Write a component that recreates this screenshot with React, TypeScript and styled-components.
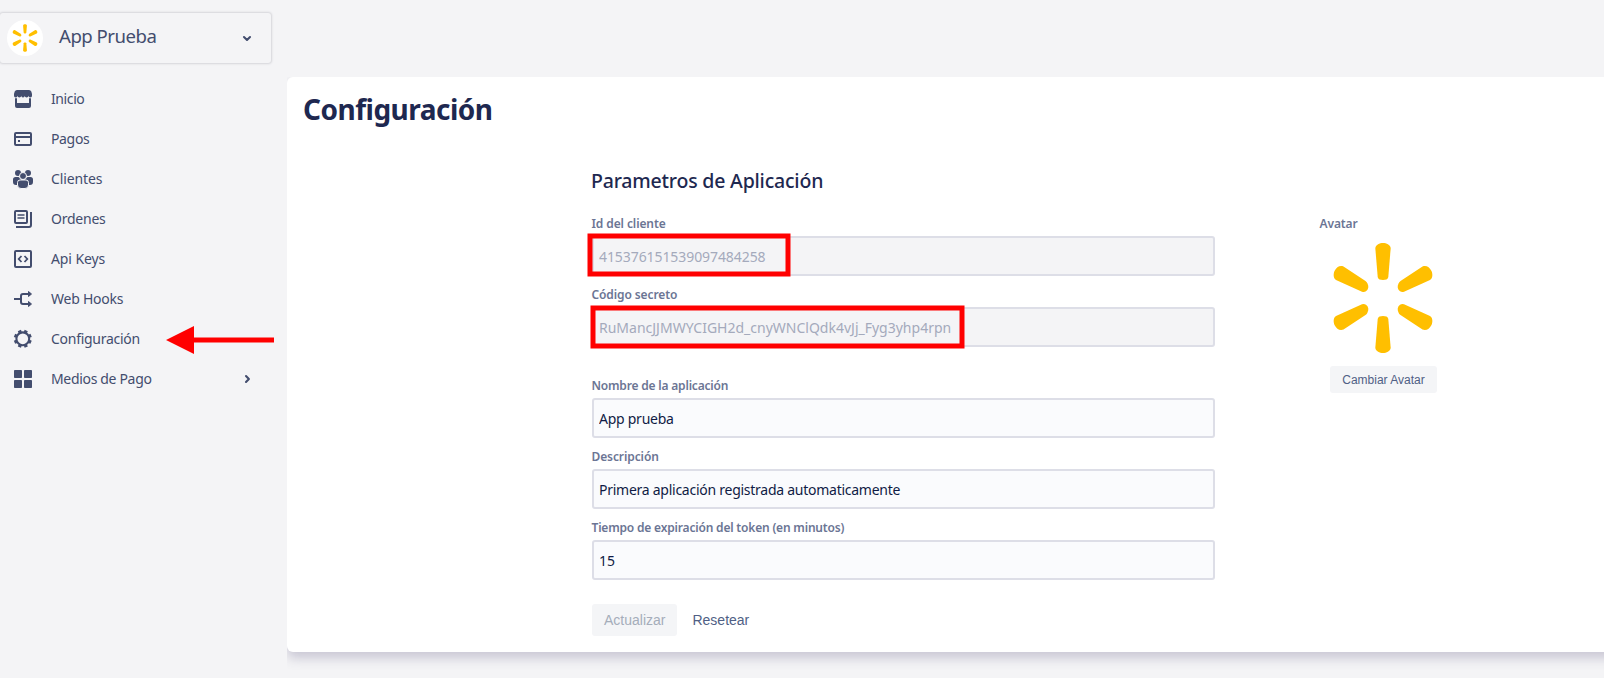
import React from "react";
import styled, { createGlobalStyle } from "styled-components";

const GlobalStyle = createGlobalStyle`
  *, *::before, *::after { box-sizing: border-box; }
  body {
    margin: 0;
    background: #f4f4f6;
    font-family: "Noto Sans", "Open Sans", sans-serif;
    font-size: 14px;
    overflow: hidden;
  }
`;

const Page = styled.div`
  display: flex;
  width: 100%;
  height: 678px;
  overflow: hidden;
`;

const Sidebar = styled.aside`
  flex: 0 0 287px;
  padding-top: 13px;
  color: #434d6e;
`;

const AppSwitcher = styled.button`
  display: flex;
  align-items: center;
  width: 271px;
  height: 50px;
  margin: 0;
  padding: 0 12px 0 7px;
  border: 0;
  border-radius: 3px;
  background: #f4f4f6;
  box-shadow: 0 0 2px 1px #d5d5da;
  color: inherit;
  font-family: inherit;
  text-align: left;
`;

const AppAvatar = styled.span`
  display: flex;
  align-items: center;
  justify-content: center;
  width: 36px;
  height: 36px;
  border-radius: 50%;
  background: #fff;
`;

const AppName = styled.span`
  flex: 1;
  padding: 0 0 6px 16px;
  font-size: 18.6px;
  line-height: 25px;
  letter-spacing: -0.5px;
`;

const Nav = styled.nav`
  display: flex;
  flex-direction: column;
  padding-top: 16px;
`;

const NavItem = styled.a`
  position: relative;
  display: flex;
  align-items: center;
  width: 271px;
  height: 40px;
  padding: 0 12px 0 11px;
`;

const NavText = styled.span<{ $track: number }>`
  flex: 1;
  margin-left: 16px;
  line-height: 20px;
  letter-spacing: ${(p) => p.$track}px;
`;

const Icon = styled.svg`
  flex: none;
  display: block;
  width: 24px;
  height: 24px;
`;

const Pointer = styled.svg`
  position: absolute;
  left: 166px;
  top: 6px;
  width: 109px;
  height: 30px;
`;

const Main = styled.main`
  flex: 1;
  min-width: 0;
  padding-top: 77px;
`;

const Card = styled.section`
  height: 575px;
  margin-right: -30px;
  padding: 15px 0 0 16px;
  border-radius: 6px 0 0 6px;
  background: #fff;
  box-shadow: 0 6px 12px 0 rgba(70, 64, 110, 0.25);
  clip-path: inset(0 0 -30px 0);
`;

const Title = styled.h1`
  margin: 0;
  color: #1e2850;
  font-size: 28px;
  font-weight: 700;
  line-height: 34px;
  letter-spacing: -0.5px;
`;

const Columns = styled.div`
  display: flex;
  gap: 105px;
  margin: 41px 0 0 289px;
`;

const Form = styled.form`
  display: flex;
  flex-direction: column;
  width: 623px;
`;

const Subtitle = styled.h2`
  margin: 0 0 21px -1px;
  color: #1e2850;
  font-size: 19.5px;
  font-weight: 550;
  line-height: 28px;
  letter-spacing: -0.2px;
`;

const Group = styled.div`
  display: flex;
  flex-direction: column;
  gap: 11px;
  margin-bottom: 31px;

  & + & { margin-bottom: 24px; }
`;

const Field = styled.div`
  position: relative;
  height: 60px;
`;

const Label = styled.label<{ $track: number }>`
  display: block;
  height: 20px;
  margin-left: -0.5px;
  color: #6b7594;
  font-size: 12px;
  font-weight: 650;
  line-height: 16px;
  letter-spacing: ${(p) => p.$track}px;
`;

const Input = styled.input<{ $track: number }>`
  display: block;
  width: 100%;
  height: 40px;
  padding: 0 6px 0 5px;
  border: 2px solid #dddee7;
  border-radius: 3px;
  background: #fafbfd;
  color: #101b45;
  font-family: inherit;
  font-size: 14px;
  line-height: 20px;
  letter-spacing: ${(p) => p.$track}px;

  &:disabled {
    background: #f4f4f6;
    color: #a4aabc;
  }
`;

const Highlight = styled.svg`
  position: absolute;
  left: -6px;
  top: 16px;
  width: 390px;
  height: 50px;
`;

const Actions = styled.div`
  display: flex;
  gap: 3px;
`;

const Button = styled.button<{ $plain?: boolean; $small?: boolean }>`
  height: ${(p) => (p.$small ? 27 : 32)}px;
  padding: 0 12px;
  border: 0;
  border-radius: 3px;
  background: ${(p) => (p.$plain ? "transparent" : "#f4f5f7")};
  color: #505f85;
  font-family: "Liberation Sans", Arial, sans-serif;
  font-size: ${(p) => (p.$small ? 12 : 14)}px;
  line-height: ${(p) => (p.$small ? 14 : 20)}px;
  white-space: nowrap;

  &:disabled { color: #a5adba; }
`;

const AvatarPanel = styled.div`
  display: flex;
  flex-direction: column;
  width: 127px;
  padding-top: 49px;
`;

const AvatarImage = styled.div`
  display: flex;
  justify-content: center;
  height: 124px;
  padding: 6px 1px 0 0;
  margin-bottom: 6px;
`;

const Centered = styled.div`
  display: flex;
  justify-content: center;
`;

const Spark = ({ size }: { size: number }) => (
  <svg width={size} height={size} viewBox="-56 -56 112 112" fill="#ffbf00">
    {[0, 180].map((a) => (
      <path
        key={a}
        transform={`rotate(${a})`}
        d="M-7.7-50C-7-53.5-3.5-55 0-55S7-53.5 7.7-50L5.3-21C5-18.6 2.5-18 0-18S-5-18.6-5.3-21Z"
      />
    ))}
    {[
      [1, 1],
      [-1, 1],
      [1, -1],
      [-1, -1],
    ].map(([x, y]) => (
      <path
        key={`${x}${y}`}
        transform={`scale(${x} ${-y})`}
        d="M15.5-14.5C14-11.5 14.5-8.5 17-6.7Q19-5.5 21-6.3L47-18C49.5-19.5 50-23.5 48.5-27C46.5-31 43-33 39.5-31.5L17.5-17Q16-16 15.5-14.5Z"
      />
    ))}
  </svg>
);

const Chevron = ({ right }: { right?: boolean }) => (
  <Icon viewBox="0 0 24 24" fill="none" stroke="currentColor" strokeWidth="2.1" strokeLinecap="round" strokeLinejoin="round">
    <path d={right ? "M11 9l2.9 3-2.9 3" : "M9 11l3 2.9 3-2.9"} />
  </Icon>
);

const icons = {
  shop: (
    <g fill="currentColor">
      <path d="M6 3h12a2.5 2.5 0 0 1 2.3 1.5L21 7v1.500a1.800 1.800 0 0 1-3.600 0.300 1.800 1.800 0 0 1-3.600 0 1.800 1.800 0 0 1-3.600 0 1.800 1.800 0 0 1-3.600 0A1.800 1.800 0 0 1 3 8.500V7l.7-2.500A2.500 2.500 0 0 1 6 3z" />
      <path d="M4 11.300h2V16h12v-4.700h2V19a2 2 0 0 1-2 2H6a2 2 0 0 1-2-2z" />
    </g>
  ),
  card: (
    <g fill="none" stroke="currentColor" strokeWidth="2">
      <rect x="4" y="6" width="16" height="12" rx="1" />
      <path d="M4 10h16" />
      <path d="M7 14h2" />
    </g>
  ),
  people: (
    <g fill="currentColor">
      <circle cx="7" cy="6" r="3" />
      <circle cx="17" cy="6" r="3" />
      <path d="M2 12.5A2.5 2.5 0 0 1 4.5 10H7.5L10 12.5V18H5a3 3 0 0 1-3-3zM22 12.5A2.5 2.5 0 0 0 19.5 10h-3L14 12.5V18h5a3 3 0 0 0 3-3z" />
      <g stroke="#f4f4f6">
        <circle cx="12" cy="9" r="3.5" />
        <path d="M6.5 15.5A2.5 2.5 0 0 1 9 13h6a2.5 2.5 0 0 1 2.5 2.5v2.5a3.5 3.5 0 0 1-3.5 3.5h-4a3.5 3.5 0 0 1-3.5-3.5z" />
      </g>
    </g>
  ),
  orders: (
    <g fill="none" stroke="currentColor" strokeWidth="2">
      <rect x="4" y="4" width="12" height="12" rx="1" />
      <path d="M6.5 8h7M6.5 11h7" strokeWidth="1.6" />
      <path d="M20 5v13a2 2 0 0 1-2 2H5" />
    </g>
  ),
  code: (
    <g fill="none" stroke="currentColor" strokeWidth="2">
      <rect x="4" y="4" width="16" height="16" rx="1" />
      <path d="M10.5 9L7.7 12l2.8 3M13.5 9l2.8 3-2.8 3" strokeWidth="1.8" />
    </g>
  ),
  hooks: (
    <g fill="none" stroke="currentColor" strokeWidth="2">
      <path d="M3 12h7M19 7h-7a2 2 0 0 0-2 2v6a2 2 0 0 0 2 2h7" />
      <path d="M17.5 4.5L20.5 7l-3 2.5zM17.5 14.5l3 2.5-3 2.5z" fill="currentColor" strokeWidth="1" strokeLinejoin="round" />
    </g>
  ),
  gear: (
    <g fill="none" stroke="currentColor">
      <circle cx="11.8" cy="11.8" r="6.4" strokeWidth="2.1" />
      {[22.5, 67.5, 112.5, 157.5, 202.5, 247.5, 292.5, 337.5].map((a) => (
        <path key={a} d="M10.1 4h3.4" strokeWidth="2.4" transform={`rotate(${a} 11.8 11.8)`} />
      ))}
    </g>
  ),
  grid: (
    <g fill="currentColor">
      <rect x="3" y="3" width="8" height="8" rx="0.8" />
      <rect x="13" y="3" width="8" height="8" rx="0.8" />
      <rect x="3" y="13" width="8" height="8" rx="0.8" />
      <rect x="13" y="13" width="8" height="8" rx="0.8" />
    </g>
  ),
};

const navItems: { icon: keyof typeof icons; text: string; track: number; marked?: boolean; expandable?: boolean }[] = [
  { icon: "shop", text: "Inicio", track: -0.4 },
  { icon: "card", text: "Pagos", track: -0.35 },
  { icon: "people", text: "Clientes", track: -0.1 },
  { icon: "orders", text: "Ordenes", track: -0.23 },
  { icon: "code", text: "Api Keys", track: -0.1 },
  { icon: "hooks", text: "Web Hooks", track: -0.25 },
  { icon: "gear", text: "Configuración", track: -0.28, marked: true },
  { icon: "grid", text: "Medios de Pago", track: -0.33, expandable: true },
];

interface FieldProps {
  id: string;
  label: string;
  value: string;
  labelTrack: number;
  track: number;
  disabled?: boolean;
  children?: React.ReactNode;
}

const TextField = ({ id, label, value, labelTrack, track, disabled, children }: FieldProps) => (
  <Field>
    <Label htmlFor={id} $track={labelTrack}>{label}</Label>
    <Input id={id} defaultValue={value} disabled={disabled} $track={track} />
    {children}
  </Field>
);

export default function App() {
  return (
    <>
      <GlobalStyle />
      <Page>
        <Sidebar>
          <AppSwitcher type="button">
            <AppAvatar>
              <Spark size={28} />
            </AppAvatar>
            <AppName>App Prueba</AppName>
            <Chevron />
          </AppSwitcher>
          <Nav>
            {navItems.map((item) => (
              <NavItem key={item.text}>
                <Icon viewBox="0 0 24 24">{icons[item.icon]}</Icon>
                <NavText $track={item.track}>{item.text}</NavText>
                {item.expandable && <Chevron right />}
                {item.marked && (
                  <Pointer viewBox="0 0 109 30" fill="#f00">
                    <path d="M0 15L28 1V12.5H108V17.5H28V29Z" />
                  </Pointer>
                )}
              </NavItem>
            ))}
          </Nav>
        </Sidebar>
        <Main>
          <Card>
            <Title>Configuración</Title>
            <Columns>
              <Form>
                <Subtitle>Parametros de Aplicación</Subtitle>
                <Group>
                  <TextField id="client" label="Id del cliente" value="415376151539097484258" labelTrack={-0.1} track={-0.08} disabled>
                    <Highlight viewBox="0 0 390 50" fill="none" stroke="#f00" strokeWidth="5">
                      <rect x="4" y="4" width="198" height="38" />
                    </Highlight>
                  </TextField>
                  <TextField id="secret" label="Código secreto" value="RuMancJJMWYCIGH2d_cnyWNClQdk4vJj_Fyg3yhp4rpn" labelTrack={-0.1} track={0} disabled>
                    <Highlight viewBox="0 0 390 50" fill="none" stroke="#f00" strokeWidth="5">
                      <rect x="7" y="5" width="369" height="38" />
                    </Highlight>
                  </TextField>
                </Group>
                <Group>
                  <TextField id="name" label="Nombre de la aplicación" value="App prueba" labelTrack={-0.19} track={-0.26} />
                  <TextField id="description" label="Descripción" value="Primera aplicación registrada automaticamente" labelTrack={-0.1} track={-0.26} />
                  <TextField id="expiration" label="Tiempo de expiración del token (en minutos)" value="15" labelTrack={-0.185} track={0} />
                </Group>
                <Actions>
                  <Button type="button" disabled>Actualizar</Button>
                  <Button type="button" $plain>Resetear</Button>
                </Actions>
              </Form>
              <AvatarPanel>
                <Label as="span" $track={-0.1}>Avatar</Label>
                <AvatarImage>
                  <Spark size={112} />
                </AvatarImage>
                <Centered>
                  <Button type="button" $small>Cambiar Avatar</Button>
                </Centered>
              </AvatarPanel>
            </Columns>
          </Card>
        </Main>
      </Page>
    </>
  );
}
